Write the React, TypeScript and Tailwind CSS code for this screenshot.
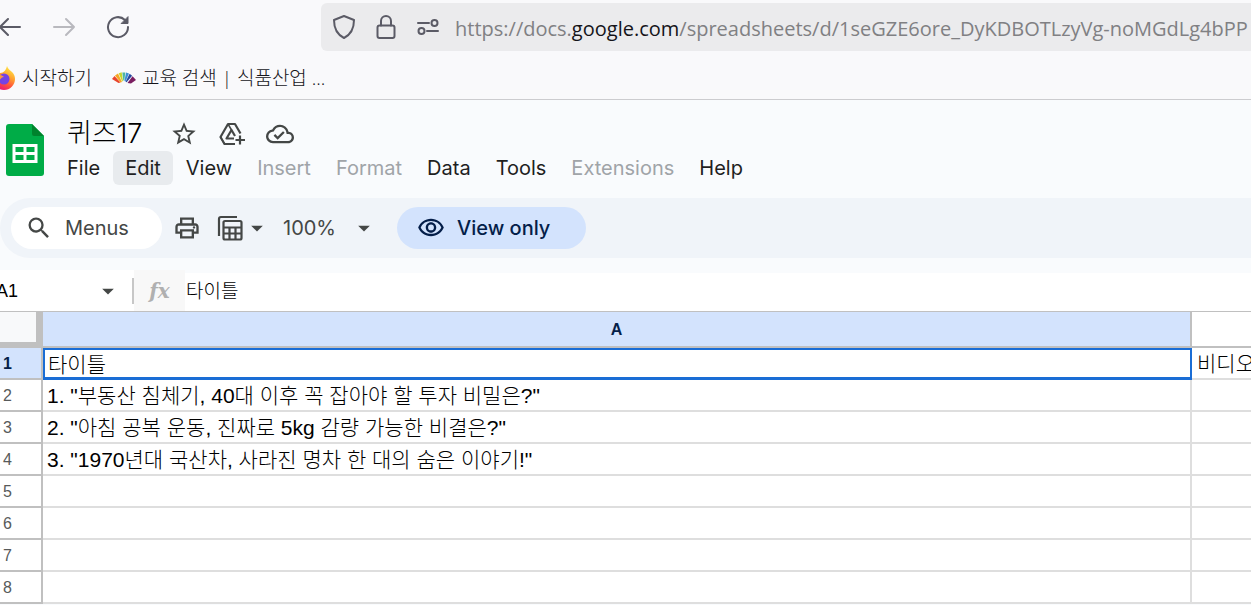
import type { ReactNode } from 'react';
import {
  MdArrowDropDown,
  MdOutlineCloudDone,
  MdOutlinePrint,
  MdOutlineVisibility,
  MdSearch,
  MdStarBorder,
} from 'react-icons/md';

const menus = [
  { label: 'File' },
  { label: 'Edit', active: true },
  { label: 'View' },
  { label: 'Insert', disabled: true },
  { label: 'Format', disabled: true },
  { label: 'Data' },
  { label: 'Tools' },
  { label: 'Extensions', disabled: true },
  { label: 'Help' },
];

const rows = [
  { a: '타이틀', b: '비디오' },
  { a: '1. "부동산 침체기, 40대 이후 꼭 잡아야 할 투자 비밀은?"', b: '' },
  { a: '2. "아침 공복 운동, 진짜로 5kg 감량 가능한 비결은?"', b: '' },
  { a: '3. "1970년대 국산차, 사라진 명차 한 대의 숨은 이야기!"', b: '' },
  { a: '', b: '' },
  { a: '', b: '' },
  { a: '', b: '' },
  { a: '', b: '' },
];

function LineIcon({ className, children }: { className: string; children: ReactNode }) {
  return (
    <svg viewBox="0 0 24 24" fill="none" stroke="currentColor" strokeWidth="2" strokeLinecap="round" strokeLinejoin="round" className={className} aria-hidden="true">
      {children}
    </svg>
  );
}

function FirefoxLogo() {
  return (
    <svg viewBox="0 0 24 24" className="w-6 h-6" aria-hidden="true">
      <defs>
        <linearGradient id="flame" x1="0.8" y1="0" x2="0.3" y2="1">
          <stop offset="0" stopColor="#fff14a" />
          <stop offset="0.4" stopColor="#ffa02e" />
          <stop offset="0.7" stopColor="#ff4f3d" />
          <stop offset="1" stopColor="#e6127f" />
        </linearGradient>
      </defs>
      <path d="M15 0c1 3 3 4 5 6 2 2 3 4 3 7A11 11 0 0 1 1 13C1 9 3 6 5 4c0 2 1 3 3 3 4 0 6-3 7-7z" fill="url(#flame)" />
      <circle cx="12" cy="13" r="5.5" fill="#7542e5" />
      <path d="M4 10c3-2 6-1 8 1-3 0-3 3-6 3-2 0-3-2-2-4z" fill="#ff9640" />
    </svg>
  );
}

function FanLogo() {
  return (
    <svg viewBox="0 0 24 12" className="w-6 h-3" aria-hidden="true">
      <path d="M0 7l2.500-3 6 6.500-2 .5z" fill="#e8452c" />
      <path d="M3 3.500l3-2 4 8.500-1.500 .5z" fill="#f6a623" />
      <path d="M6.700 1.200l3-1 1.300 9h-1z" fill="#c5d52f" />
      <path d="M10.300 0.500h3l-1 8h-1z" fill="#4cb6a0" />
      <path d="M14 0.500l3 1-3.500 8-1-.5z" fill="#3b8fd6" />
      <path d="M17.600 1.800l2.500 2-5.500 6.500-1-.5z" fill="#28479f" />
      <path d="M20.600 4.300L24 8l-5 3.500-3.500-.5z" fill="#7a1d60" />
    </svg>
  );
}

function SheetsLogo() {
  return (
    <svg viewBox="0 0 38 52" className="w-[38px] h-[52px]" aria-hidden="true">
      <path d="M3 0h23l12 12v37a3 3 0 0 1-3 3H3a3 3 0 0 1-3-3V3a3 3 0 0 1 3-3z" fill="#00ac47" />
      <path d="M26 0l12 12H28a2 2 0 0 1-2-2z" fill="#00832d" />
      <path d="M6.500 20h25v19h-25zM9.500 23v5h8v-5zM20.500 23v5h8v-5zM9.500 31v5h8v-5zM20.500 31v5h8v-5z" fill="#fff" fillRule="evenodd" />
    </svg>
  );
}

function AddToDriveIcon() {
  return (
    <svg viewBox="0 0 28 28" className="w-7 h-7" fill="none" stroke="currentColor" strokeWidth="2.200" strokeLinejoin="round" aria-hidden="true">
      <path d="M17 24H6.500L2.500 17 10 4h7l5.500 9.500" />
      <path d="M16 18.500H8.500L13.500 10l3.500 6" />
      <path d="M2.500 17l4 7M10 4l3.500 6" strokeWidth="1.500" />
      <path d="M22 15.500v9M17.500 20h9.500" />
    </svg>
  );
}

function FilterViewIcon() {
  return (
    <svg viewBox="0 0 26 26" className="w-[26px] h-[26px]" fill="none" stroke="currentColor" strokeWidth="2.200" aria-hidden="true">
      <path d="M2 21V4a2 2 0 0 1 2-2h16" />
      <rect x="6.500" y="6" width="18" height="18.500" rx="1.500" />
      <path d="M6.500 12.500h18M6.500 18.500h18M12.500 12.500v12M18.500 12.500v12" />
    </svg>
  );
}

function BrowserBar() {
  return (
    <div className="flex items-start pt-[3px] pb-[5px] text-[#5b5b66]">
      <div className="flex h-12 w-[321px] shrink-0 items-center">
        <button aria-label="Back" className="-ml-[3px] w-6">
          <LineIcon className="w-6 h-6">
            <path d="M23 12H3M11 4l-8 8 8 8" />
          </LineIcon>
        </button>
        <button aria-label="Forward" disabled className="ml-[31px] w-6 text-[#b9b9be]">
          <LineIcon className="w-6 h-6">
            <path d="M2 12h20M14 4l8 8-8 8" />
          </LineIcon>
        </button>
        <button aria-label="Reload" className="ml-[30px] w-6">
          <LineIcon className="w-6 h-6">
            <path d="M22 12a10 10 0 1 1-3-7" />
            <path d="M22 2v6.500h-6.500z" fill="currentColor" strokeWidth="1" />
          </LineIcon>
        </button>
      </div>
      <div className="flex h-12 min-w-0 flex-1 items-center overflow-hidden rounded-l-md bg-[#ebebed] pl-[11px]">
        <LineIcon className="w-6 h-6 shrink-0">
          <path d="M12 1l10 4c0 8-2 14-10 18C4 19 2 13 2 5z" />
        </LineIcon>
        <LineIcon className="ml-[18px] w-6 h-6 shrink-0">
          <rect x="3.500" y="10.500" width="17" height="12.500" rx="2" />
          <path d="M7 10.500V6a5 5 0 0 1 10 0v4.500" />
        </LineIcon>
        <LineIcon className="ml-[18px] w-6 h-6 shrink-0">
          <path d="M2 8h11M11 16h11" />
          <circle cx="18.500" cy="8" r="3" />
          <circle cx="5.500" cy="16" r="3" />
        </LineIcon>
        <div role="textbox" aria-label="Address" className="mt-1 ml-[15px] whitespace-nowrap font-['Open_Sans','Noto_Sans_CJK_KR',sans-serif] text-xl text-[#808083]">
          https://docs.<span className="text-[#15141a]">google.com</span>/spreadsheets/d/1seGZE6ore_DyKDBOTLzyVg-noMGdLg4bPP
        </div>
      </div>
    </div>
  );
}

function Bookmarks() {
  return (
    <nav className="flex h-11 items-center border-b border-[#cccccf] font-['Open_Sans','Noto_Sans_CJK_KR',sans-serif] text-[19px] leading-6 font-light text-[#15141a]">
      <a href="#start" className="-ml-2 flex items-center gap-[6px]">
        <FirefoxLogo />
        시작하기
      </a>
      <a href="#search" className="ml-5 flex items-center gap-[6px]">
        <FanLogo />
        교육 검색 | 식품산업 ...
      </a>
    </nav>
  );
}

function Header() {
  return (
    <header className="flex pt-4 pb-[13px] pl-[6px]">
      <div className="mt-2">
        <SheetsLogo />
      </div>
      <div className="ml-[11px]">
        <div className="flex h-[35px] items-center pl-3 text-[#444746]">
          <h1 className="font-['Inter','Noto_Sans_CJK_KR',sans-serif] text-[27px] leading-8 font-light text-black">퀴즈17</h1>
          <button aria-label="Star" className="ml-7">
            <MdStarBorder size={28} />
          </button>
          <button aria-label="Move" className="ml-5">
            <AddToDriveIcon />
          </button>
          <button aria-label="See document status" className="ml-5">
            <MdOutlineCloudDone size={28} />
          </button>
        </div>
        <div role="menubar" className="flex gap-px">
          {menus.map((m) => (
            <button
              key={m.label}
              role="menuitem"
              disabled={m.disabled}
              className={`h-[34px] rounded-md px-3 text-xl ${m.active ? 'bg-[#e8ebee]' : ''} ${m.disabled ? 'text-[#a0a4a8]' : 'text-[#1f1f1f]'}`}
            >
              {m.label}
            </button>
          ))}
        </div>
      </div>
    </header>
  );
}

function Toolbar() {
  return (
    <div className="flex h-[60px] items-center rounded-l-full bg-[#f0f4f9] pl-[11px] text-xl text-[#444746]">
      <button className="flex h-[42px] w-[151px] items-center gap-3 rounded-full bg-white pl-[14px]">
        <MdSearch size={28} />
        Menus
      </button>
      <button aria-label="Print" className="ml-[11px]">
        <MdOutlinePrint size={28} />
      </button>
      <button aria-label="Filter views" className="ml-4 flex items-center">
        <FilterViewIcon />
        <MdArrowDropDown size={28} />
      </button>
      <button className="ml-3 flex items-center gap-[14px]">
        100%
        <MdArrowDropDown size={28} />
      </button>
      <button className="ml-[19px] flex h-[42px] w-[189px] items-center gap-3 rounded-full bg-[#d3e3fd] pl-5 font-medium text-[#041e49]">
        <MdOutlineVisibility size={28} />
        View only
      </button>
    </div>
  );
}

function FormulaBar() {
  return (
    <div className="mt-3 flex h-[42px] items-center border-b border-[#c0c0c0] bg-white font-['Liberation_Sans','Noto_Sans_CJK_KR',sans-serif]">
      <input aria-label="Name box" defaultValue="A1" className="-ml-1 w-[98px] text-lg leading-6 text-black outline-none" />
      <button aria-label="Named ranges" className="text-[#444746]">
        <MdArrowDropDown size={28} />
      </button>
      <div className="ml-[10px] h-[26px] w-[2px] bg-[#c7c7c7]" />
      <label htmlFor="formula" className="flex h-full w-[51px] items-center justify-center bg-[#f8f8f8] font-['DejaVu_Serif',serif] text-xl font-bold italic text-[#b0b0b0]">
        fx
      </label>
      <input
        id="formula"
        defaultValue="타이틀"
        className="h-full min-w-0 flex-1 border-t-[3px] border-[#f9fbfd] pb-[5px] pl-px text-[19px] leading-6 font-light text-black outline-none"
      />
    </div>
  );
}

function Grid() {
  return (
    <table className="w-full table-fixed border-separate border-spacing-0 bg-white font-['Liberation_Sans','Noto_Sans_CJK_KR',sans-serif]">
      <colgroup>
        <col className="w-[43px]" />
        <col />
        <col className="w-[59px]" />
      </colgroup>
      <thead>
        <tr className="h-9">
          <th className="border-r-[7px] border-b-[6px] border-[#c0c0c0] bg-[#f8f9fa]" />
          <th scope="col" className="border-r-2 border-b-2 border-[#c0c0c0] bg-[#d3e3fd] p-0 pt-[2px] text-base font-bold text-[#041e49]">
            A
          </th>
          <th className="border-b-2 border-[#c0c0c0]" />
        </tr>
      </thead>
      <tbody>
        {rows.map((row, i) => (
          <tr key={i} className="h-8">
            <th
              scope="row"
              className={`border-r-2 border-b-2 border-[#c0c0c0] p-0 pt-[2px] pl-[3px] text-left text-base leading-6 ${i === 0 ? 'bg-[#d3e3fd] font-bold text-[#041e49]' : 'font-normal text-[#575a5a]'}`}
            >
              {i + 1}
            </th>
            <td
              className={`overflow-hidden whitespace-nowrap p-0 pt-[2px] text-[21px] leading-6 font-light text-black ${i === 0 ? 'border-2 border-b-[3px] border-[#1a6dd5] pl-[3px]' : 'border-r-2 border-b-2 border-[#dedede] pl-1'}`}
            >
              {row.a}
            </td>
            <td className="overflow-hidden whitespace-nowrap border-b-2 border-[#dedede] p-0 pt-[2px] pl-[5px] text-[21px] leading-6 font-light text-black">
              {row.b}
            </td>
          </tr>
        ))}
      </tbody>
    </table>
  );
}

export default function App() {
  return (
    <div className="h-screen overflow-hidden bg-[#f9fbfd] font-['Inter',sans-serif]">
      <div className="bg-[#f9f9fb]">
        <BrowserBar />
        <Bookmarks />
      </div>
      <Header />
      <Toolbar />
      <FormulaBar />
      <Grid />
    </div>
  );
}
